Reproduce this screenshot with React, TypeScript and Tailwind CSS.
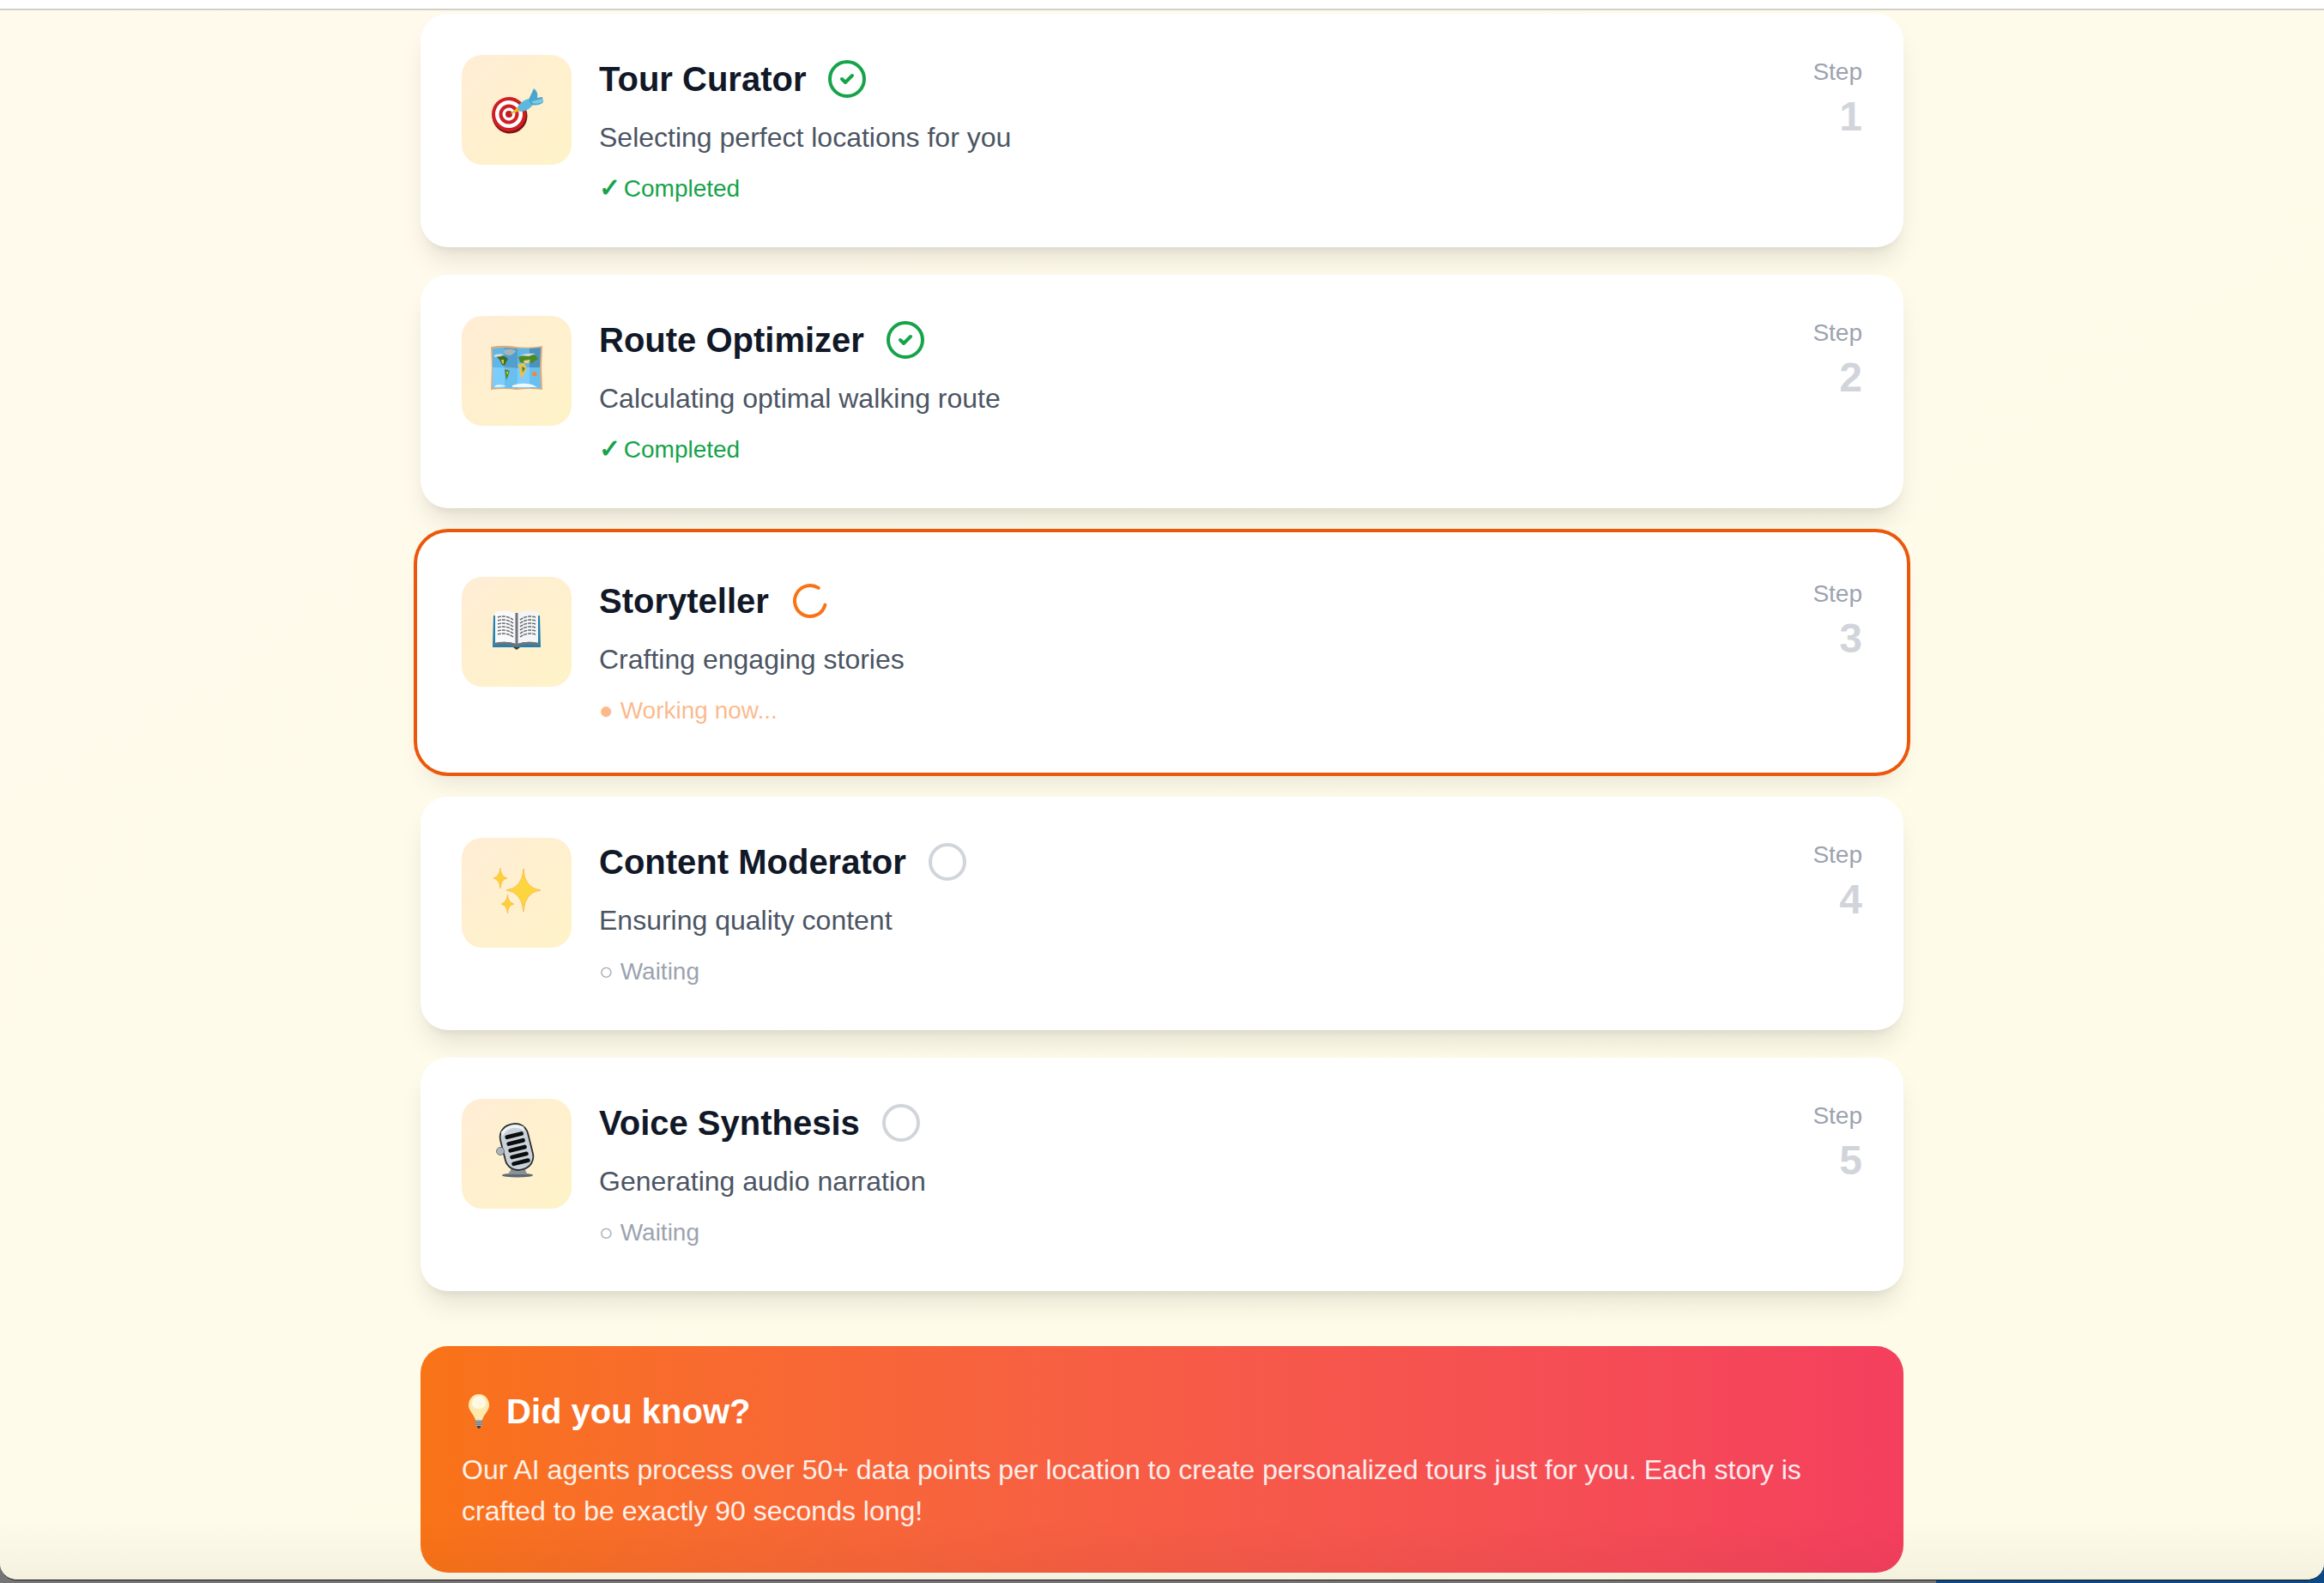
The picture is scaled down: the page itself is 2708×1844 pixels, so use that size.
import { Circle, CircleCheck, LoaderCircle } from "lucide-react";
import type { ReactNode } from "react";

function TargetEmoji() {
  return (
    <svg viewBox="0 0 60 60" className="w-[60px] h-[60px] overflow-visible">
      <ellipse cx="22" cy="37" rx="20.5" ry="20.5" fill="#7d1313" transform="rotate(-12 22 37)" />
      <ellipse cx="21" cy="35" rx="20" ry="20" fill="#cf1f24" transform="rotate(-12 21 35)" />
      <ellipse cx="21" cy="35" rx="16" ry="16" fill="#ffffff" transform="rotate(-12 21 35)" />
      <ellipse cx="21" cy="35" rx="11.5" ry="11.5" fill="#cf1f24" transform="rotate(-12 21 35)" />
      <ellipse cx="21" cy="35" rx="7.5" ry="7.5" fill="#ffffff" transform="rotate(-12 21 35)" />
      <ellipse cx="21" cy="35" rx="4" ry="4" fill="#c11a20" />
      <path d="M22 35 L32 26 L35 31 Z" fill="#e9b32a" />
      <path d="M31 27 C35 20 41 17 47 17 L50 22 C47 28 41 32 34 32 Z" fill="#5cb8dc" />
      <path d="M44 18 L50 5 C54 8 55 12 54 16 L60 15 L61 21 C57 25 51 25 47 24 Z" fill="#4aa5cf" />
      <path d="M48 20 L60 17 L60 21 C56 23 51 23 48 22 Z" fill="#79cbe8" />
    </svg>
  );
}

function MapEmoji() {
  return (
    <svg viewBox="0 0 60 60" className="w-[60px] h-[60px] overflow-visible">
      <path d="M0 2 Q15 -0.5 30 2 Q45 4 60 1 L59 26 L60 52 Q45 50 30 52 Q15 50 0 52 L1 26 Z" fill="#d8ac84" />
      <path d="M2 4 L16 3 L16 26 L2 26 Z" fill="#5fb6e8" />
      <path d="M16 3 L31 4 L31 27 L16 26 Z" fill="#509fcf" />
      <path d="M31 4 L45 4 L45 26 L31 27 Z" fill="#5fb6e8" />
      <path d="M45 4 L58 3 L57 26 L45 26 Z" fill="#4a93c0" />
      <path d="M2 26 L16 26 L16 50 L2 50 Z" fill="#7ccdfb" />
      <path d="M16 26 L31 27 L31 50 L16 50 Z" fill="#69bff0" />
      <path d="M31 27 L45 26 L45 50 L31 50 Z" fill="#7ccdfb" />
      <path d="M45 26 L57 26 L58 50 L45 50 Z" fill="#69bff0" />
      <path d="M15 6 Q24 3 29 7 Q26 12 20 12 Q15 11 15 6 Z" fill="#aab4b8" />
      <path d="M6 13 Q11 11 16 13 L20 16 Q18 19 16 24 L13 23 L10 17 Z" fill="#3f6f22" />
      <path d="M12 17 L15 17 L15 22 L13 21 Z" fill="#dcc04e" />
      <path d="M16 28 L22 30 L20 36 L18 41 L17 35 Z" fill="#4c8a24" />
      <path d="M18 31 L20.5 31 L19 35 Z" fill="#e3c452" />
      <path d="M32 14 Q42 9 52 12 L55 16 L48 21 L45 19 L40 21 L34 20 Z" fill="#4c8a24" />
      <path d="M31 22 L39 21 L42 27 L37 38 L34.5 37 L33.5 29 Z" fill="#e2c25a" />
      <path d="M36 25 L40 27 L37 32 Z" fill="#4c8a24" />
      <path d="M38 18 L46 17 L44 21 L39 21 Z" fill="#e9cf8a" />
      <path d="M48 32 Q51 30 53 32 L54 36 L49 36 Z" fill="#ee8a33" />
      <path d="M5 47 Q12 45 18 48 L5 49 Z M25 47 Q36 43 48 46 L54 49 L25 49 Z" fill="#f4f7f8" />
      <path d="M3 12 Q9 9 15 11 L12 13 L5 14 Z M34 12 Q42 9 52 10 L44 13 Z" fill="#d9dcdc" />
    </svg>
  );
}

function BookEmoji() {
  const lines = [16, 20, 24, 28, 32, 36];
  return (
    <svg viewBox="0 0 60 60" className="w-[60px] h-[60px] overflow-visible">
      <path d="M3 11 L30 14 L57 11 L58 48 L33 48 L30 50 L27 48 L2 48 Z" fill="#2580b0" />
      <path d="M5 7 Q18 3 29 9 L29 44 Q18 40 5 43 Z" fill="#fafafa" />
      <path d="M55 7 Q42 3 31 9 L31 44 Q42 40 55 43 Z" fill="#f4f5f6" />
      <path d="M4 43 Q18 40 29 44 L30 46 L31 44 Q42 40 56 43 L56 46 Q42 43 31 47 L29 47 Q18 43 4 46 Z" fill="#6f7478" />
      <rect x="28.5" y="8" width="3" height="38" fill="#70757a" />
      {lines.map((y) => (
        <g key={y} stroke="#5f6469" strokeWidth="1.4" strokeDasharray="4 1">
          <path d={`M8 ${y - 3} Q18 ${y - 6} 26 ${y}`} fill="none" />
          <path d={`M52 ${y - 3} Q42 ${y - 6} 34 ${y}`} fill="none" />
        </g>
      ))}
      <path d="M26 48 L34 48 L30 51 Z" fill="#3c3a1e" />
    </svg>
  );
}

function SparklesEmoji() {
  return (
    <svg viewBox="0 0 60 60" className="w-[60px] h-[60px] overflow-visible">
      <path d="M38 2 Q38.5 24 58 27 Q39.5 29 38 52 Q36 29 18 27 Q37 24 38 2 Z" fill="#fdd53f" stroke="#f6a623" strokeWidth="0.6" />
      <path d="M11 1 Q11.5 11 19 13 Q11.5 14.5 11 25 Q10 14.5 3 13 Q10 11 11 1 Z" fill="#fdd03a" stroke="#f6a623" strokeWidth="0.5" />
      <path d="M19.5 32 Q20 41 27 43 Q20 44.5 19.5 54 Q18.5 44.5 12 43 Q18.5 41 19.5 32 Z" fill="#fdd03a" stroke="#f6a623" strokeWidth="0.5" />
    </svg>
  );
}

function MicEmoji() {
  const slots = [7, 15, 23, 31, 39];
  return (
    <svg viewBox="0 0 60 60" className="w-[60px] h-[60px] overflow-visible">
      <ellipse cx="31" cy="55" rx="18" ry="2.6" fill="#5d6a73" />
      <path d="M24 44 L40 42 Q39 50 43 54 L19 54 Q24 50 24 44 Z" fill="#8a9096" />
      <g transform="rotate(-14 30 24)">
        <rect x="14" y="-5" width="33" height="54" rx="15" fill="#c9d2d8" stroke="#2b2e31" strokeWidth="1.8" />
        <path d="M17 6 Q30 -7 44 6 L44 1 Q30 -9 17 1 Z" fill="#f0f4f6" />
        {slots.map((y) => (
          <rect key={y} x="20" y={y - 1} width="22" height="4.8" rx="2.4" fill="#0c0d0e" />
        ))}
      </g>
      <circle cx="11" cy="27" r="4.5" fill="#aeb5ba" stroke="#6f767b" />
    </svg>
  );
}

function BulbEmoji() {
  return (
    <svg viewBox="0 0 40 40" className="w-[40px] h-[40px] shrink-0">
      <path d="M20 0 C28 0 32 7 32 13 C32 19 26 23 24 30 L16 30 C14 23 8 19 8 13 C8 7 12 0 20 0 Z" fill="#fde9ad" />
      <path d="M20 2 C25 2 28 7 28 11 C28 15 24 17 20 17 C16 17 12 15 12 11 C12 7 15 2 20 2 Z" fill="#fff8e2" />
      <rect x="16" y="30" width="8" height="7" rx="1" fill="#a9adb0" />
      <rect x="16" y="32" width="8" height="1.2" fill="#6f7477" />
      <rect x="16" y="34.5" width="8" height="1.2" fill="#6f7477" />
      <path d="M17.5 37 L22.5 37 L21 40 L19 40 Z" fill="#3d4144" />
    </svg>
  );
}

type Agent = {
  name: string;
  desc: string;
  state: "done" | "active" | "waiting";
  emoji: ReactNode;
};

const agents: Agent[] = [
  { name: "Tour Curator", desc: "Selecting perfect locations for you", state: "done", emoji: <TargetEmoji /> },
  { name: "Route Optimizer", desc: "Calculating optimal walking route", state: "done", emoji: <MapEmoji /> },
  { name: "Storyteller", desc: "Crafting engaging stories", state: "active", emoji: <BookEmoji /> },
  { name: "Content Moderator", desc: "Ensuring quality content", state: "waiting", emoji: <SparklesEmoji /> },
  { name: "Voice Synthesis", desc: "Generating audio narration", state: "waiting", emoji: <MicEmoji /> },
];

function AgentCard({ agent, step }: { agent: Agent; step: number }) {
  const active = agent.state === "active";
  return (
    <div
      className={
        active
          ? "flex items-start gap-8 rounded-[32px] bg-white p-12 shadow-[0_20px_30px_-6px_rgba(0,0,0,0.1),0_8px_12px_-8px_rgba(0,0,0,0.1)] ring-4 ring-[#ea580c] ring-offset-4"
          : "flex items-start gap-8 rounded-[32px] bg-white p-12 shadow-[0_20px_30px_-6px_rgba(0,0,0,0.1),0_8px_12px_-8px_rgba(0,0,0,0.1)]"
      }
    >
      <div className="flex h-32 w-32 shrink-0 items-center justify-center rounded-3xl bg-linear-to-br from-[#ffedd5] to-[#fef3c7]">
        {agent.emoji}
      </div>
      <div className="flex-1">
        <div className="mb-4 flex h-14 items-center gap-6">
          <h3 className="text-[40px] leading-14 font-bold text-[#111827]">{agent.name}</h3>
          {agent.state === "done" && <CircleCheck size={48} className="text-[#16a34a]" />}
          {active && <LoaderCircle size={48} className="rotate-[15deg] text-[#f97316]" />}
          {agent.state === "waiting" && <Circle size={48} className="text-[#d1d5db]" />}
        </div>
        <p className="text-[32px] leading-12 text-[#4b5563]">{agent.desc}</p>
        <div className="mt-4 text-[28px] leading-10">
          {agent.state === "done" && (
            <span className="text-[#16a34a]">
              <span className="inline-block w-[21px] text-[30px] leading-none font-bold">✓</span> Completed
            </span>
          )}
          {active && <span className="text-[#f97316]/50">● Working now...</span>}
          {agent.state === "waiting" && <span className="text-[#9ca3af]">○ Waiting</span>}
        </div>
      </div>
      <div className="text-right">
        <div className="text-[28px] leading-10 text-[#9ca3af]">Step</div>
        <div className="text-[48px] leading-16 font-bold text-[#d1d5db]">{step}</div>
      </div>
    </div>
  );
}

export default function App() {
  return (
    <div className="h-[1844px] w-full overflow-hidden bg-[linear-gradient(to_right,#757575_2256px,#0b4a87_2256px)] font-['Liberation_Sans',sans-serif]">
      <div className="flex h-[1841px] flex-col overflow-hidden rounded-b-[20px] border-b border-[#1a1a1a] bg-white">
        <div className="h-3 shrink-0 border-b-2 border-[#d0cfca]" />
        <div className="relative flex-1 overflow-hidden bg-linear-to-br from-[#fffaec] via-[#fffbea] to-[#fefce8] pt-1">
          <div className="mx-auto flex w-[1728px] flex-col gap-8">
            {agents.map((agent, i) => (
              <AgentCard key={agent.name} agent={agent} step={i + 1} />
            ))}
            <div className="mt-8 rounded-[32px] bg-linear-to-r from-[#f97316] to-[#f43f5e] p-12 text-white">
              <h3 className="mb-4 flex h-14 items-center gap-3 text-[40px] leading-14 font-bold">
                <BulbEmoji />
                Did you know?
              </h3>
              <p className="text-[32px] leading-12 text-white/90">
                Our AI agents process over 50+ data points per location to create personalized tours just for you. Each story is crafted to be exactly 90 seconds long!
              </p>
            </div>
          </div>
          <div className="pointer-events-none absolute inset-x-0 bottom-0 h-[70px] bg-linear-to-t from-black/4 to-transparent" />
        </div>
      </div>
    </div>
  );
}
